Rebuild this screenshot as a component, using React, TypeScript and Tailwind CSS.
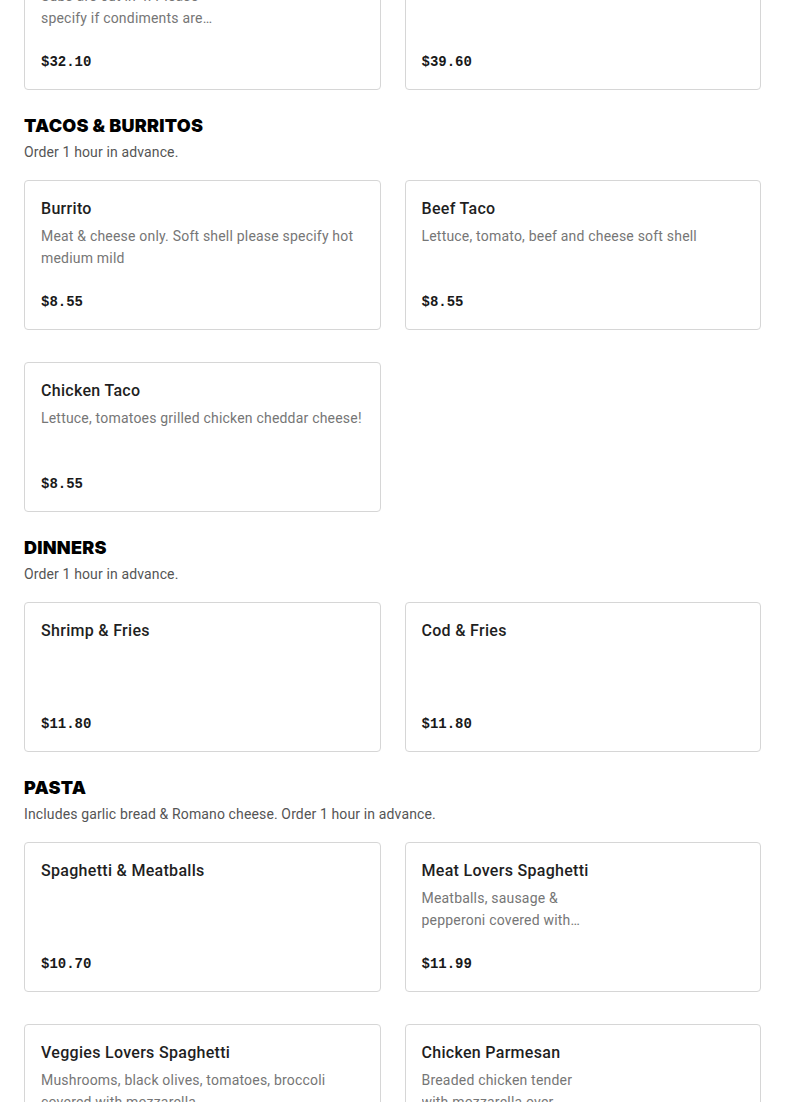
type Item = {
  name: string;
  description?: string;
  price: string;
  narrow?: boolean;
};

type Section = {
  title?: string;
  note?: string;
  items: Item[];
};

const sections: Section[] = [
  {
    items: [
      {
        name: "Party Sub",
        description: "Subs are cut in 4. Please specify if condiments are wanted on the side.",
        price: "$32.10",
        narrow: true,
      },
      { name: "Party Sub Large", price: "$39.60" },
    ],
  },
  {
    title: "Tacos & Burritos",
    note: "Order 1 hour in advance.",
    items: [
      { name: "Burrito", description: "Meat & cheese only. Soft shell please specify hot medium mild", price: "$8.55" },
      { name: "Beef Taco", description: "Lettuce, tomato, beef and cheese soft shell", price: "$8.55" },
      { name: "Chicken Taco", description: "Lettuce, tomatoes grilled chicken cheddar cheese!", price: "$8.55" },
    ],
  },
  {
    title: "Dinners",
    note: "Order 1 hour in advance.",
    items: [
      { name: "Shrimp & Fries", price: "$11.80" },
      { name: "Cod & Fries", price: "$11.80" },
    ],
  },
  {
    title: "Pasta",
    note: "Includes garlic bread & Romano cheese. Order 1 hour in advance.",
    items: [
      { name: "Spaghetti & Meatballs", price: "$10.70" },
      {
        name: "Meat Lovers Spaghetti",
        description: "Meatballs, sausage & pepperoni covered with mozzarella cheese",
        price: "$11.99",
        narrow: true,
      },
      {
        name: "Veggies Lovers Spaghetti",
        description: "Mushrooms, black olives, tomatoes, broccoli covered with mozzarella",
        price: "$10.70",
      },
      {
        name: "Chicken Parmesan",
        description: "Breaded chicken tender with mozzarella over spaghetti",
        price: "$11.99",
        narrow: true,
      },
    ],
  },
];

function MenuCard({ item }: { item: Item }) {
  return (
    <div className="flex h-[150px] flex-col justify-between rounded-[4px] border border-[#d6d6d6] bg-white px-4 pb-[15px] pt-4">
      <div>
        <h3 className="font-['Roboto',sans-serif] text-[16px] font-medium leading-6 tracking-[0.3px] text-[#1f1f1f]">
          {item.name}
        </h3>
        {item.description && (
          <p
            className={
              item.narrow
                ? "mt-[4px] line-clamp-2 w-[172px] text-[14px] leading-[22px] tracking-[0.2px] text-[#767676]"
                : "mt-[4px] line-clamp-2 text-[14px] leading-[22px] tracking-[0.2px] text-[#767676]"
            }
          >
            {item.description}
          </p>
        )}
      </div>
      <div className="font-['Liberation_Mono',monospace] text-[14px] font-bold leading-6 text-[#191919]">
        {item.price}
      </div>
    </div>
  );
}

export default function App() {
  return (
    <div className="h-screen overflow-hidden bg-white font-['Roboto','Liberation_Sans',sans-serif]">
      <div className="-mt-[60px] px-6">
        {sections.map((section, i) => (
          <section key={i} className={section.title ? "pt-[24px]" : ""}>
            {section.title && (
              <>
                <h2 className="font-['Inter',sans-serif] text-[18px] font-black uppercase leading-6 tracking-[0.25px] text-[#000000]">
                  {section.title}
                </h2>
                <p className="mt-[4px] text-[14px] leading-5 tracking-[0.13px] text-[#555555]">{section.note}</p>
              </>
            )}
            <div className={section.title ? "mt-[18px] grid grid-cols-2 gap-x-6 gap-y-8" : "grid grid-cols-2 gap-x-6 gap-y-8"}>
              {section.items.map((item) => (
                <MenuCard key={item.name} item={item} />
              ))}
            </div>
          </section>
        ))}
      </div>
    </div>
  );
}
